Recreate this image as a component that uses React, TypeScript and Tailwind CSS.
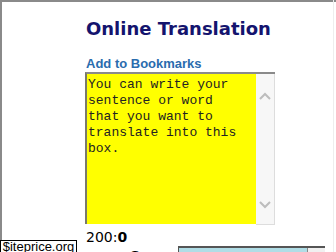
import React from "react";

export default function App() {
  const lines = [
    "You can write your",
    "sentence or word",
    "that you want to",
    "translate into this",
    "box.",
  ];
  return (
    <div className="relative w-[336px] h-[252px] overflow-hidden bg-white">
      <div className="absolute inset-0 border-l-2 border-t-2 border-[#8a8a8a] pointer-events-none" />
      <div className="absolute top-0 right-[2px] w-px h-full bg-[#eeeeee]" />
      <div className="pl-[86px] pt-[18px] flex flex-col" style={{ fontFamily: '"DejaVu Sans", Verdana, sans-serif' }}>
        <h1 className="text-[18px] leading-[22px] font-bold text-[#14146e] m-0">Online Translation</h1>
        <div className="mt-[16px] text-[13px] leading-[16px] font-bold text-[#2a6cae]" style={{ fontFamily: '"Liberation Sans", Arial, sans-serif' }}>Add to Bookmarks</div>
        <div className="-ml-px flex w-[190px] h-[152px] border-t-2 border-l-2 border-[#7a7a6a] border-t-[#8a8a8a]">
          <div className="w-[169px] h-full bg-[#ffff00] pl-[1px] pt-[3px]" style={{ fontFamily: '"Liberation Mono", "Courier New", monospace' }}>
            {lines.map((l, i) => (
              <div key={i} className="text-[13px] leading-[16px] text-[#222] whitespace-pre">{l}</div>
            ))}
          </div>
          <div className="w-[19px] h-[151px] bg-[#f7f7f7] border-r border-b border-[#dddddd] flex flex-col items-center justify-between pt-[18px] pb-[15px]">
            <svg width="12" height="8" viewBox="0 0 12 8"><path d="M1 7 L6 2 L11 7" fill="none" stroke="#bdbdbd" strokeWidth="2" /></svg>
            <svg width="12" height="8" viewBox="0 0 12 8"><path d="M1 1 L6 6 L11 1" fill="none" stroke="#bdbdbd" strokeWidth="2" /></svg>
          </div>
        </div>
        <div className="mt-[5px] text-[14px] leading-[16px] text-black">200:<b>0</b></div>
        <div className="flex items-start ml-[44px] mt-[1px]">
          <div className="text-[15px] leading-[16px] font-bold text-black pt-[2px] w-[48px]" style={{ fontFamily: '"Liberation Sans", Arial, sans-serif' }}>Source:</div>
          <div className="flex w-[147px] h-[20px] border-t-2 border-l border-[#555]">
            <div className="flex-1 bg-[#b0dde6] text-[13px] text-[#444] pl-[4px]">Arabic</div>
            <div className="w-[18px] bg-[#f0f0f0] border-l border-[#888]" />
          </div>
        </div>
      </div>
      <div className="absolute left-0 top-[240px] w-[77px] h-[13px] bg-white border border-black flex items-center justify-center text-[13px] leading-[12px] text-black" style={{ fontFamily: '"Liberation Sans", Arial, sans-serif' }}>
        $iteprice.org
      </div>
    </div>
  );
}
